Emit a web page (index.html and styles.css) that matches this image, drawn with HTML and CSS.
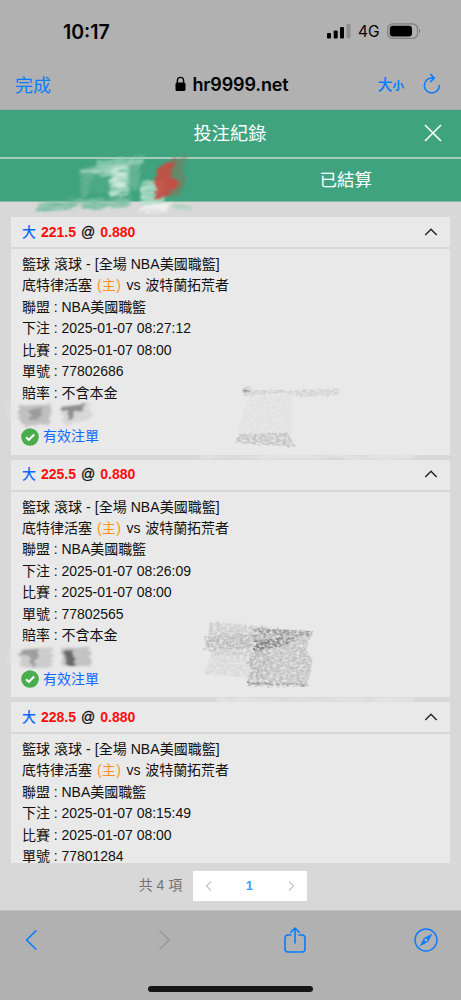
FILE: index.html
```html
<!DOCTYPE html>
<html lang="zh-Hant">
<head>
<meta charset="utf-8">
<meta name="viewport" content="width=device-width">
<title>投注紀錄</title>
<link rel="stylesheet" href="styles.css">
</head>
<body>
<div class="phone">
  <header class="status">
    <span class="clock">10:17</span>
    <span class="signals">
      <svg class="bars" width="25" height="16" viewBox="0 0 25 16"><rect x="0" y="10" width="4" height="5.5" rx="1"/><rect x="6.7" y="7.5" width="4" height="8" rx="1"/><rect x="13" y="4" width="4" height="11.5" rx="1"/><rect x="19.5" y="1" width="4" height="14.5" rx="1" fill="#8e8e8e"/></svg>
      <span class="net">4G</span>
      <svg class="battery" width="35" height="17" viewBox="0 0 35 17"><rect x=".8" y=".8" width="29.7" height="14.6" rx="4.8" fill="none" stroke="#7f7f7f" stroke-width="1.2"/><rect x="2.8" y="2.7" width="22.2" height="10.8" rx="3"/><path d="M32 5.5q2.3 2.5 0 5z" fill="#777"/></svg>
    </span>
  </header>
  <nav class="address">
    <span class="done">完成</span>
    <span class="site"><svg width="11" height="16" viewBox="0 0 11 16"><rect x=".5" y="6.5" width="10" height="8.5" rx="1.6"/><path d="M2.4 7V4.5a3.1 3.1 0 0 1 6.2 0V7" fill="none" stroke="#000" stroke-width="1.4"/></svg>hr9999.net</span>
    <span class="tools"><span class="big">大</span><span class="small">小</span><svg width="20" height="22" viewBox="0 0 20 22" fill="none" stroke="#087cff" stroke-width="1.5" stroke-linecap="round" stroke-linejoin="round"><path d="M12.2 5H9.8a7.5 7.5 0 1 0 7.5 7.4M8.6 1.2 12.3 5 8.6 8.7"/></svg></span>
  </nav>
  <div class="titlebar"><h1>投注紀錄</h1><svg class="close" width="20" height="20" viewBox="0 0 20 20" fill="none" stroke="#fff" stroke-width="1.6"><path d="m2 2 16 16M18 2 2 18"/></svg></div>
  <div class="tabs"><span></span><span>已結算</span></div>
  <main class="content">
    <div class="list">
      <section class="bet">
        <div class="odds"><b class="pick">大</b> <b>221.5</b> <b class="at">@</b> <b>0.880</b><svg class="chev" width="14" height="8" viewBox="0 0 14 8"><path d="m1.3 7 5.7-5.7L12.7 7"/></svg></div>
        <div class="details">
          <p class="match">籃球 滾球 - [全場 NBA美國職籃]</p><p class="teams">底特律活塞 <span class="home">(主)</span> vs 波特蘭拓荒者</p><p>聯盟 : NBA美國職籃</p><p>下注 : 2025-01-07 08:27:12</p><p>比賽 : 2025-01-07 08:00</p><p>單號 : 77802686</p><p>賠率 : 不含本金</p>
          <p class="valid"><svg width="18" height="18" viewBox="0 0 18 18"><circle cx="9" cy="9" r="8.8" fill="#49ad4d"/><path d="m5 9.2 2.8 2.7 5.4-5.3" fill="none" stroke="#fff" stroke-width="2.1"/></svg>有效注單</p>
        </div>
      </section>
      <section class="bet">
        <div class="odds"><b class="pick">大</b> <b>225.5</b> <b class="at">@</b> <b>0.880</b><svg class="chev" width="14" height="8" viewBox="0 0 14 8"><path d="m1.3 7 5.7-5.7L12.7 7"/></svg></div>
        <div class="details">
          <p class="match">籃球 滾球 - [全場 NBA美國職籃]</p><p class="teams">底特律活塞 <span class="home">(主)</span> vs 波特蘭拓荒者</p><p>聯盟 : NBA美國職籃</p><p>下注 : 2025-01-07 08:26:09</p><p>比賽 : 2025-01-07 08:00</p><p>單號 : 77802565</p><p>賠率 : 不含本金</p>
          <p class="valid"><svg width="18" height="18" viewBox="0 0 18 18"><circle cx="9" cy="9" r="8.8" fill="#49ad4d"/><path d="m5 9.2 2.8 2.7 5.4-5.3" fill="none" stroke="#fff" stroke-width="2.1"/></svg>有效注單</p>
        </div>
      </section>
      <section class="bet">
        <div class="odds"><b class="pick">大</b> <b>228.5</b> <b class="at">@</b> <b>0.880</b><svg class="chev" width="14" height="8" viewBox="0 0 14 8"><path d="m1.3 7 5.7-5.7L12.7 7"/></svg></div>
        <div class="details">
          <p class="match">籃球 滾球 - [全場 NBA美國職籃]</p><p class="teams">底特律活塞 <span class="home">(主)</span> vs 波特蘭拓荒者</p><p>聯盟 : NBA美國職籃</p><p>下注 : 2025-01-07 08:15:49</p><p>比賽 : 2025-01-07 08:00</p><p>單號 : 77801284</p>
        </div>
      </section>
    </div>
    <div class="pager"><span class="total">共 4 項</span><div class="pages"><svg width="8" height="12" viewBox="0 0 8 12"><path d="M6 1.5 1.5 6 6 10.5"/></svg><b>1</b><svg width="8" height="12" viewBox="0 0 8 12"><path d="M2 1.5 6.5 6 2 10.5"/></svg></div></div>
  </main>
  <footer class="toolbar">
    <svg width="14" height="22" viewBox="0 0 14 22"><path d="M11.8 2 2.6 11l9.2 9"/></svg>
    <svg class="off" width="14" height="22" viewBox="0 0 14 22"><path d="m2 2 9.2 9L2 20"/></svg>
    <svg class="share" width="24" height="28" viewBox="0 0 24 28"><path d="M8 9H5Q2 9 2 12v11q0 3 3 3h14q3 0 3-3V12q0-3-3-3h-3M12 17V2.3M7.8 6.3 12 2l4.2 4.3"/></svg>
    <svg class="compass" width="24" height="24" viewBox="0 0 24 24"><circle cx="12" cy="12" r="11"/><path class="needle" d="M17.8 6.2 13.9 13.7 6.2 17.8 10.1 10.3z"/><circle cx="12" cy="12" r="1.5" fill="#b1b1b1" stroke="none"/></svg>
    <i class="homebar"></i>
  </footer>
  <svg class="scribbles" width="461" height="1000" viewBox="0 0 461 1000">
    <defs>
      <filter id="brush" x="-10%" y="-20%" width="120%" height="140%"><feTurbulence type="fractalNoise" baseFrequency=".06 .5" numOctaves="3" seed="7" result="n"/><feDisplacementMap in="SourceGraphic" in2="n" scale="9" xChannelSelector="R" yChannelSelector="G" result="d"/><feColorMatrix in="n" values="0 0 0 0 0 0 0 0 0 0 0 0 0 0 0 1.6 0 0 0 0" result="m"/><feComposite in="d" in2="m" operator="in"/><feGaussianBlur stdDeviation=".8"/></filter>
      <filter id="pencil" x="-10%" y="-20%" width="120%" height="140%" color-interpolation-filters="sRGB"><feTurbulence type="fractalNoise" baseFrequency=".3 .4" numOctaves="3" seed="12" result="n"/><feDisplacementMap in="SourceGraphic" in2="n" scale="5" xChannelSelector="R" yChannelSelector="G" result="d"/><feColorMatrix in="n" values="0 0 0 0 0 0 0 0 0 0 0 0 0 0 0 2.2 0 0 0 -.45" result="m"/><feComposite in="d" in2="m" operator="in"/><feGaussianBlur stdDeviation=".7"/></filter>
      <filter id="smear" x="-20%" y="-20%" width="140%" height="140%"><feTurbulence type="fractalNoise" baseFrequency=".04 .3" numOctaves="2" seed="4" result="n"/><feDisplacementMap in="SourceGraphic" in2="n" scale="8" xChannelSelector="R" yChannelSelector="G"/><feGaussianBlur stdDeviation=".9"/></filter>
    </defs>
    <g filter="url(#brush)" transform="translate(1 1) rotate(-4 110 185)">
      <path d="M36 197 82 196 73 205 33 206z" fill="#6fbb9f"/><path d="M78 197h52l-3 10H80z" fill="#7bc0a7"/>
      <path d="M80 167 142 161 140 170 80 177z" fill="#a5d6c3"/><path d="M80 171h14l-9 24h-6z" fill="#64b294"/>
      <path d="M98 158h47v7H97z" fill="#8fcdb5"/><path d="M94 173h16v19H86z" fill="#4eaa89"/><path d="M110 164 134 160 127 195h-19z" fill="#b9e0d1"/><path d="M114 167h13l-3 20h-12z" fill="#dff3eb"/><path d="M130 165h12l-5 25h-10z" fill="#69b798"/>
      <path d="M140 183h24l-2 24h-23z" fill="#b6e0cd"/><path d="M155 204 191 211 188 215 157 210z" fill="#a5d2bf"/><path d="M139 206 170 207 163 214 136 212z" fill="#f1f4f2"/>
    </g>
    <path d="m172 160 15-5-4 14 4 10-7 17-14-3z" fill="#94684f" opacity=".55" filter="url(#brush)"/>
    <path d="m157 167 18-8-4 16 9 8-9 10-17 6 2-12-4-4 6-9z" fill="#c94c43" opacity=".9" filter="url(#smear)"/>
    <g filter="url(#smear)" transform="translate(1 1)">
      <path d="m18 405 33-2-3 20-24 3-7-10z" fill="#b2b2b2" opacity=".75"/><path d="m29 408 13-1-3 11-10 2z" fill="#848484" opacity=".6"/>
      <path d="m60 405 29-1 1 16-28 3z" fill="#ccc" opacity=".6"/><path d="m60 406 25-3-3 6-9 1-2 8-3 1-2-9-6 2z" fill="#777" opacity=".75"/>
      <path d="m18 648 34-2-1 20-31 1z" fill="#bbb" opacity=".6"/><path d="m20 649 18-1-3 14-4 3-2-10-9-3z" fill="#8a8a8a" opacity=".7"/><path d="m60 647 29 1 1 15-28 3z" fill="#aaa" opacity=".6"/><path d="m63 648 8 1 4 16-8 0-3-9z" fill="#444" opacity=".7"/>
    </g>
    <g filter="url(#pencil)">
      <path d="M243 390h48l49-1-2 6-36 2-19-4-38 3z" fill="#aaa" opacity=".36"/><path d="m248 397 43-2 1 38-55 1z" fill="#aaa" opacity=".12"/><path d="m239 434 49-1 8 14-61-4z" fill="#999" opacity=".45"/><path d="m243 388 8-1-1 5-7 1z" fill="#888" opacity=".7"/>
      <path d="m210 622 62 5-3 30-58-3-4-14z" fill="#aaa" opacity=".45"/><path d="m212 653 58 3-3 23-63-5z" fill="#aaa" opacity=".25"/><path d="m204 636 53-3v15l-53 2z" fill="#999" opacity=".35"/>
      <path d="m253 628 60 3-7 19 7 11-6 25-60-2 4-17-4-5 8-8z" fill="#919191" opacity=".45"/><path d="m255 640 44-3-16 9-29 5z" fill="#606060" opacity=".6"/><path d="m254 628 59 3-1 5-48-1z" fill="#777" opacity=".5"/><path d="m248 682 61 2v3l-62-1z" fill="#777" opacity=".5"/>
    </g>
    <g fill="#e6e6e6" filter="url(#smear)" opacity=".75"><path d="M202 455h213v4H200z"/><path d="M216 698h198v4H214z"/><path d="M7 402h8v17H7zM7 645h8v22H7z" opacity=".55"/></g>
  </svg>
</div>
</body>
</html>
```
FILE: styles.css
```css
* { box-sizing: border-box; }
body { margin: 0; font-family: "Liberation Sans", "Noto Sans CJK TC", sans-serif; }
.phone { position: relative; width: 461px; height: 1000px; overflow: hidden; background: #b1b1b1; display: flex; flex-direction: column; }
svg { display: block; flex: none; }
.status { height: 62px; display: flex; justify-content: space-between; padding: 20px 39px 0 63px; font-family: Inter, sans-serif; }
.clock { font-size: 19.5px; line-height: 24px; font-weight: 600; letter-spacing: 0; }
.signals { display: flex; height: 23px; align-items: center; }
.bars { margin-top: -1px; }
.net { font-size: 15.5px; width: 29px; margin-left: 6px; letter-spacing: -.1px; }
.address { height: 48px; display: grid; grid-template-columns: 120px 1fr 120px; align-items: center; padding: 0 19px 3px 15px; color: #087cff; font-family: Inter, "Noto Sans CJK TC", sans-serif; border-bottom: 1px solid #a7a7a7; }
.done { font-size: 18px; margin-top: -1px; }
.site { display: flex; justify-content: center; align-items: center; gap: 7px; margin-left: 6px; color: #000; font-size: 18px; font-weight: 600; letter-spacing: -.15px; white-space: nowrap; }
.tools { display: flex; justify-content: flex-end; align-items: center; font-weight: 500; margin-top: -1px; }
.big { font-size: 15px; }
.small { font-size: 11.5px; font-weight: 700; padding-top: 3px; margin-right: 18px; }
.titlebar { height: 49px; background: #40a37f; border-bottom: 2px solid #a6cdbf; color: #fff; display: grid; grid-template-columns: 60px 1fr 60px; align-items: center; }
.titlebar h1 { grid-column: 2; margin: 0 0 0 -1px; text-align: center; font-size: 18.2px; line-height: 24px; font-weight: 400; }
.close { justify-self: center; margin: -1px 0 0 3px; }
.tabs { height: 43px; background: #40a37f; border-bottom: 1px solid #83b9a5; color: #fff; display: grid; grid-template-columns: 1fr 1fr; align-items: center; text-align: center; font-size: 17.5px; padding-bottom: 3px; }
.content { height: 709px; background: #d8d8d8; padding: 15px 11px 0; border-bottom: 1px solid #c0c0c0; }
.list { height: 646px; overflow: hidden; display: flex; flex-direction: column; gap: 5px; }
.bet { flex: none; height: 237.5px; background: #e9e9e9; }
.odds { height: 32px; padding: 0 12px 1px 11px; display: flex; align-items: center; gap: 5px; border-bottom: 2px solid #d7d7d7; font-size: 14px; color: #ff0d0d; }
.odds .pick { color: #1265ff; font-weight: 500; margin-top: -2px; }
.odds .at { color: #111; font-weight: 400; -webkit-text-stroke: .3px; }
.chev { margin-left: auto; fill: none; stroke: #222; stroke-width: 1.4; }
.details { padding: 5px 11px 0; font-size: 14px; color: #111; }
.details p { margin: 0; height: 21.45px; line-height: 21.45px; white-space: nowrap; letter-spacing: -.03px; }
.details .match { letter-spacing: .05px; }
.details .teams { word-spacing: .8px; }
.home { color: #ff941e; margin: 0 .8px 0 .4px; letter-spacing: .3px; }
.details .valid { margin-top: 22px; display: flex; align-items: center; gap: 4px; color: #1268ff; }
.valid svg { margin-left: -1px; }
.pager { height: 45px; display: flex; align-items: center; justify-content: center; gap: 11px; padding-right: 15px; }
.total { color: #737373; font-size: 14px; margin-top: -4px; }
.pages { width: 114px; height: 30px; background: #fff; display: flex; align-items: center; justify-content: space-between; padding: 0 12px; font-size: 13px; color: #409eff; }
.pages b { margin-left: -2px; }
.pages svg { fill: none; stroke: #c0c4cc; stroke-width: 1.2; }
.toolbar { position: relative; height: 89px; padding: 15px 23px 0 24px; display: flex; justify-content: flex-start; align-items: flex-start; }
.toolbar svg { fill: none; stroke: #087cff; stroke-width: 1.7; stroke-linecap: round; stroke-linejoin: round; height: 28px; }
.toolbar .off { stroke: #999; margin-left: 120px; }
.toolbar .share { margin: 0 auto 0 111px; stroke-width: 1.6; }
.toolbar .compass { stroke-width: 1.4; }
.needle { fill: #087cff; stroke-width: .5; }
.homebar { position: absolute; left: 148px; bottom: 8px; width: 165px; height: 6px; border-radius: 3px; background: #161616; }
.scribbles { position: absolute; inset: 0; pointer-events: none; }
```
